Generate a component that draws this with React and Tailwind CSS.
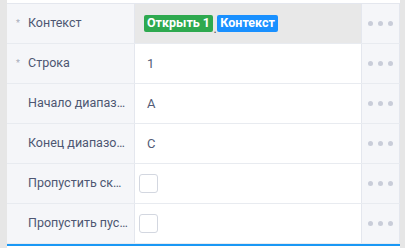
import React from "react";

const rows = [
  { label: "Контекст", required: true, kind: "badges" },
  { label: "Строка", required: true, kind: "text", value: "1" },
  { label: "Начало диапазона", kind: "text", value: "A" },
  { label: "Конец диапазона", kind: "text", value: "C" },
  { label: "Пропустить скрытые", kind: "check" },
  { label: "Пропустить пустые", kind: "check" },
];

function Dots() {
  return (
    <div className="w-[39px] shrink-0 border-l border-r border-[#e4e7ee] bg-[#f5f6f9] flex items-center justify-center gap-[5px]">
      <span className="w-[5px] h-[5px] rounded-full bg-[#c9cdd9]" />
      <span className="w-[5px] h-[5px] rounded-full bg-[#c9cdd9]" />
      <span className="w-[5px] h-[5px] rounded-full bg-[#c9cdd9]" />
    </div>
  );
}

function Value({ row }) {
  if (row.kind === "badges") {
    return (
      <div className="flex-1 bg-[#e8e8e8] flex items-center pl-[9px] text-[12.5px] font-bold leading-none">
        <span className="h-[17px] px-[3px] rounded-[2px] bg-[#2ea94f] text-white flex items-center">
          Открыть 1
        </span>
        <span className="text-[#555] font-normal self-end mb-[8px] px-[0.5px]">.</span>
        <span className="h-[17px] px-[3px] rounded-[2px] bg-[#1990ff] text-white flex items-center">
          Контекст
        </span>
      </div>
    );
  }
  if (row.kind === "check") {
    return (
      <div className="flex-1 bg-white flex items-center pl-[4px]">
        <span className="w-[19px] h-[19px] rounded-[3px] border border-[#d3d7e0] bg-white" />
      </div>
    );
  }
  return (
    <div className="flex-1 bg-white flex items-center pl-[12px] text-[13px] text-[#535c77]">
      {row.value}
    </div>
  );
}

export default function App() {
  return (
    <div className="w-[405px] h-[248px] bg-white flex font-['Roboto',sans-serif] overflow-hidden">
      <div className="w-[7px] shrink-0 bg-[#e6e6e6]" />
      <div className="flex-1 flex flex-col pt-[3px]">
        <div className="border-t border-[#e4e7ee]">
          {rows.map((row, i) => (
            <div key={i} className="h-[40px] flex border-b border-[#e8ebf0]">
              <div className="w-[128px] shrink-0 bg-[#f5f6f9] border-r border-[#e4e7ee] flex items-center pl-[9px] pr-[6px] text-[12.5px] text-[#4d5672]">
                <span className="w-[12px] shrink-0 text-[9px] text-[#a8adbb]">
                  {row.required ? "*" : ""}
                </span>
                <span className="truncate">{row.label}</span>
              </div>
              <Value row={row} />
              <Dots />
            </div>
          ))}
        </div>
        <div className="h-[2px] bg-[#1a98f5]" />
      </div>
      <div className="w-[5px] shrink-0 bg-[#e6e6e6]" />
    </div>
  );
}
